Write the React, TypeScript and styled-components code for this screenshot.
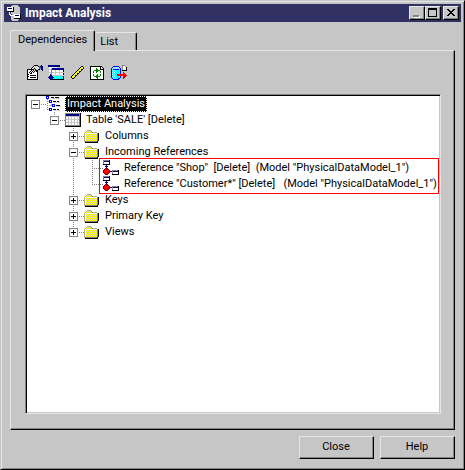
import React, { useState } from 'react';
import styled, { createGlobalStyle, css } from 'styled-components';

const face = '#c6c6c6';
const light = '#e7e7e7';
const shade = '#848484';

const GlobalStyle = createGlobalStyle`
  * { box-sizing: border-box; }
  html, body, #root { height: 100%; }
  body { margin: 0; background: ${face}; }
  body, button { font: 11px/16px Roboto, "Liberation Sans", Arial, sans-serif; color: #000; }
`;

const raised = css`
  border: 1px solid;
  border-color: ${light} #000 #000 ${light};
  box-shadow: inset -1px -1px ${shade};
`;

/* ---------- bitmap icons ---------- */

const palette: Record<string, string> = {
  k: '#000000',
  w: '#ffffff',
  g: '#848484',
  h: '#adad94',
  l: '#c6c6c6',
  n: '#000084',
  b: '#0000ff',
  y: '#ffff00',
  p: '#d6d69c',
  c: '#00ffff',
  a: '#a5f7ff',
  r: '#ff0000',
  m: '#840000',
  e: '#008400',
  s: '#4a6b9c',
};

const bitmaps = {
  app: [
    '.....llllll.....',
    '....llllllll....',
    'wwwwwwkllllll...',
    'wnnnnwkllllll...',
    'wwwwwwkllllll...',
    'wwwwwwkllllll...',
    'kkkkkkkllllll...',
    '..w.lllllllll...',
    '..w.lllllllll...',
    '..ww.llwwwwwwk..',
    '...wwwwwnnnnwk..',
    '....lllwwwwwwk..',
    '....lllwwwwwwk..',
    '....lllkkkkkkk..',
    '....llllllll....',
    '.....llllll.....',
  ],
  properties: [
    '.......kkkk...n.',
    '......kwlwlksnnn',
    '.....kwlwlwlssnn',
    '....kwlklwlwssnn',
    'kkkkkkklklwkk.nn',
    'kwwwkwkwkkk....n',
    'kwwkwkwkwkk.....',
    'kwkwkwkwwwk.....',
    'kwwkkwwwwwk.....',
    'kkwwwwwwwwk.....',
    'kwwkkkkkkwk.....',
    'kkwwwwwwwwk.....',
    'kwwkkkkkkwk.....',
    'kwwwwwwwwwk.....',
    'kkkkkkkkkkk.....',
    '................',
  ],
  tables: [
    'nnnnnnnnnnnn....',
    'nnnnnnnnnnnn....',
    'lwwlwwlwwl......',
    'lwwlnnnnnnnnnnnn',
    'lllgnnnnnnnnnnnn',
    'lwwgwwwlwwwlwwwk',
    'lwwgwwwlwwwlwwwk',
    'lllgllllllllllll',
    'lwwgwwwlwwwlwwwk',
    'lwngwwwlwwwlwwwk',
    '..nn.lllllllllll',
    '.nnnncclccclccck',
    'nnnnnnclccclccck',
    '.nnnncclccclccck',
    '..nnkkkkkkkkkkkk',
    '................',
  ],
  ruler: [
    '................',
    '............kk..',
    '...........kyyk.',
    '..........kyyyk.',
    '.........kyykk..',
    '........kyyyk...',
    '.......kyykk....',
    '......kyyyk.....',
    '.....kyykk......',
    '....kyyyk.......',
    '...kyykk........',
    '..kyyyk.........',
    '..kyyk..........',
    '...kk...........',
    '................',
    '................',
  ],
  refresh: [
    '................',
    'kkkkkkkkkkkk....',
    'kwwwwwwwwwkwk...',
    'kwwwwwewwwkwwk..',
    'kwwwwweewwkkkk..',
    'kwwweeeeeewwwk..',
    'kwwewweewwewwk..',
    'kwwewwewwwewwk..',
    'kwwwwwwwwwwwwk..',
    'kwwewwwewwewwk..',
    'kwwewweewwewwk..',
    'kwwweeeeeewwwk..',
    'kwwwwweewwwwwk..',
    'kwwwwwwewwwwwk..',
    'kkkkkkkkkkkkkk..',
    '................',
  ],
  database: [
    '...........ggg..',
    '..bbbbbb...gwwg.',
    '.baaaaaab..gwwwk',
    'bacacacacb.gwwwk',
    'bcbbbbbbcb.gwwwk',
    'bacacccccb.kkkkk',
    'bcacaccccb......',
    'bacacccccb..r...',
    'bcacaccccb..rr..',
    'bacaccrrrrrrrrr.',
    'bcacacrrrrrrrrrr',
    'bacacccccb..rrm.',
    'bcacaccccb..rm..',
    '.bacaccbb...m...',
    '..bbbbbb........',
    '................',
  ],
  hierarchy: [
    'bbb.............',
    'bwb..kkk.kkkk...',
    'bbb...lll.llll..',
    '.g..............',
    '...bbb..........',
    '.glbwb.kkk.kk...',
    '...bbb..lll.ll..',
    '.g..............',
    '.....lbbb.......',
    '.g.llgbwb.kkkk..',
    '......bbb..llll.',
    '.g..............',
    '...bbb..........',
    '.glbwb.kkk.kk...',
    '...bbb..lll.ll..',
    '................',
  ],
  table: [
    '................',
    'gggggggggggggggk',
    'gnnnnnnnnnnnnngk',
    'gnnnnnnnnnnnnngk',
    'glllllllllllllgk',
    'gwwlwwlwwlwwlwgk',
    'gwwlwwlwwlwwlwgk',
    'glllllllllllllgk',
    'gwwlwwlwwlwwlwgk',
    'gwwlwwlwwlwwlwgk',
    'glllllllllllllgk',
    'gwwlwwlwwlwwlwgk',
    'gwwlwwlwwlwwlwgk',
    'gggggggggggggggk',
    'kkkkkkkkkkkkkkkk',
    '................',
  ],
  folder: [
    '................',
    '................',
    '...hhhh.........',
    '..hypypg........',
    '.hypypypghhhh...',
    'hwwwwwwwwwwwwgk.',
    'hwypypypypypygk.',
    'hwpypypypypypgk.',
    'hwypypypypypygk.',
    'hwpypypypypypgk.',
    'hwypypypypypygk.',
    'hwpypypypypypgk.',
    'hwypypypypypygk.',
    'hggggggggggggk..',
    '.kkkkkkkkkkkkk..',
    '................',
  ],
  reference: [
    'ggggggk.........',
    'gnnnnnk.........',
    'gwwwwwk.........',
    'gwwwwwk.........',
    'kkkkkkk.........',
    '...n............',
    '..nnn...........',
    '...n............',
    '..mmm...........',
    '.mrrrm..........',
    'mrrrrrm..ggggggk',
    'mrrrrrmnngnnnnnk',
    'mrrrrrm..gwwwwwk',
    '.mrrrm...gwwwwwk',
    '..mmm....kkkkkkk',
    '................',
  ],
};

type IconName = keyof typeof bitmaps;

const Bitmap = styled.svg`
  display: block;
  flex: none;
  width: 16px;
  height: 16px;
`;

function Icon({ name }: { name: IconName }) {
  const strokes: Record<string, string> = {};
  bitmaps[name].forEach((row, y) => {
    for (const run of row.matchAll(/([a-z])\1*/g)) {
      strokes[run[1]] = (strokes[run[1]] ?? '') + `M${run.index} ${y}h${run[0].length}v1h-${run[0].length}z`;
    }
  });
  return (
    <Bitmap viewBox="0 0 16 16" shapeRendering="crispEdges" aria-hidden="true">
      {Object.entries(strokes).map(([key, d]) => (
        <path key={key} d={d} fill={palette[key]} />
      ))}
    </Bitmap>
  );
}

/* ---------- window frame ---------- */

const Window = styled.main`
  display: flex;
  flex-direction: column;
  min-height: 100%;
  padding: 3px;
  background: ${face};
  border: 1px solid;
  border-color: ${face} #000 #000 ${face};
  box-shadow: inset 1px 1px ${light}, inset -1px -1px ${shade};
`;

const TitleBar = styled.header`
  display: flex;
  align-items: center;
  height: 18px;
  padding: 0 2px 0 3px;
  background: #313163;
  color: #fff;
`;

const Title = styled.h1`
  flex: 1;
  margin: 0 0 0 2px;
  font-size: 12px;
  font-weight: bold;
  line-height: 18px;
`;

const CaptionButton = styled.button<{ $apart?: boolean }>`
  ${raised}
  display: grid;
  place-items: center;
  width: 16px;
  height: 14px;
  margin-left: ${(p) => (p.$apart ? '2px' : '0')};
  padding: 0 1px 1px 0;
  background: ${face};
`;

const Glyph = styled.svg`
  display: block;
  width: 10px;
  height: 10px;
`;

/* ---------- tabs ---------- */

const Content = styled.div`
  flex: 1;
  display: flex;
  flex-direction: column;
  padding: 8px 6px 7px;
`;

const TabList = styled.div`
  display: flex;
  align-items: flex-end;
`;

const Tab = styled.button<{ $active?: boolean }>`
  position: relative;
  z-index: ${(p) => (p.$active ? 1 : 0)};
  height: ${(p) => (p.$active ? '21px' : '18px')};
  margin-bottom: ${(p) => (p.$active ? '-1px' : '0')};
  padding: ${(p) => (p.$active ? '0 7px 3px' : '0 18px 0 5px')};
  background: ${face};
  border: 1px solid;
  border-color: ${light} #000 ${face} ${light};
  border-left-width: ${(p) => (p.$active ? '1px' : '0')};
  border-bottom-width: 0;
  border-radius: 3px 2px 0 0;
  box-shadow: inset -1px 0 ${shade};
`;

const Panel = styled.section`
  ${raised}
  flex: 1;
  display: flex;
  flex-direction: column;
  padding: 14px 13px 15px 14px;
`;

const Toolbar = styled.div`
  display: flex;
  gap: 5px;
  padding: 0 2px;
  margin-bottom: 13px;
`;

const ToolButton = styled.button`
  padding: 0;
  background: none;
  border: 0;
`;

/* ---------- tree ---------- */

const TreeBox = styled.div`
  flex: 1;
  background: #fff;
  border: 1px solid;
  border-color: ${shade} ${light} ${light} ${shade};
  box-shadow: inset 1px 1px #000, inset -1px -1px ${face};
`;

const Branch = styled.ul<{ $root?: boolean; $marked?: boolean }>`
  position: relative;
  width: max-content;
  margin: ${(p) => (p.$root ? '1px 0 0 1px' : '0 0 0 19px')};
  padding: 0;
  list-style: none;

  ${(p) =>
    p.$marked &&
    css`
      &::after {
        content: '';
        position: absolute;
        z-index: 1;
        inset: -2px 0 -2px 15px;
        border: 1px solid #f00;
        pointer-events: none;
      }
    `}
`;

const Node = styled.li<{ $root?: boolean }>`
  position: relative;

  &::before {
    content: '';
    display: ${(p) => (p.$root ? 'none' : 'block')};
    position: absolute;
    top: 0;
    bottom: 0;
    left: 8px;
    width: 1px;
    background: repeating-linear-gradient(${shade} 0 1px, transparent 1px 2px);
  }

  &:last-child::before {
    bottom: auto;
    height: 8px;
  }
`;

const Row = styled.div`
  display: flex;
  align-items: center;
  height: 16px;
`;

const Joint = styled.span`
  display: flex;
  align-items: center;
  width: 19px;
  height: 16px;
  padding-left: 4px;
  background: repeating-linear-gradient(90deg, ${shade} 0 1px, transparent 1px 2px) 8px 8px / 11px 1px no-repeat;
`;

const Expander = styled.button`
  position: relative;
  display: grid;
  place-items: center;
  width: 9px;
  height: 9px;
  padding: 0;
  background: #fff;
  border: 1px solid ${shade};
`;

const Sign = styled.svg`
  display: block;
  width: 7px;
  height: 7px;
`;

const Label = styled.span<{ $selected?: boolean }>`
  margin-left: 3px;
  padding: 0 2px;
  white-space: pre;
  ${(p) =>
    p.$selected &&
    css`
      background: #000;
      color: #fff;
      outline: 1px dotted #fff;
      outline-offset: -1px;
    `}
`;

/* ---------- footer ---------- */

const Footer = styled.footer`
  display: flex;
  justify-content: flex-end;
  gap: 6px;
  margin-top: 6px;
`;

const PushButton = styled.button`
  ${raised}
  width: 75px;
  height: 23px;
  padding: 0 1px 1px 0;
  background: ${face};
`;

interface TreeItem {
  label: string;
  icon: IconName;
  open?: boolean;
  marked?: boolean;
  children?: TreeItem[];
}

const tree: TreeItem = {
  label: 'Impact Analysis',
  icon: 'hierarchy',
  open: true,
  children: [
    {
      label: "Table 'SALE' [Delete]",
      icon: 'table',
      open: true,
      children: [
        { label: 'Columns', icon: 'folder', children: [] },
        {
          label: 'Incoming References',
          icon: 'folder',
          open: true,
          marked: true,
          children: [
            { label: 'Reference "Shop"  [Delete]  (Model "PhysicalDataModel_1")', icon: 'reference' },
            { label: 'Reference "Customer*" [Delete]   (Model "PhysicalDataModel_1")', icon: 'reference' },
          ],
        },
        { label: 'Keys', icon: 'folder', children: [] },
        { label: 'Primary Key', icon: 'folder', children: [] },
        { label: 'Views', icon: 'folder', children: [] },
      ],
    },
  ],
};

function TreeNode({ item, root }: { item: TreeItem; root?: boolean }) {
  const [open, setOpen] = useState(Boolean(item.open));
  return (
    <Node $root={root} role="treeitem" aria-selected={Boolean(root)}>
      <Row>
        <Joint>
          {item.children && (
            <Expander aria-label={`Toggle ${item.label}`} aria-expanded={open} onClick={() => setOpen(!open)}>
              <Sign viewBox="0 0 7 7" shapeRendering="crispEdges">
                <path d={open ? 'M1 3h5v1H1z' : 'M1 3h5v1H1zM3 1h1v5H3z'} />
              </Sign>
            </Expander>
          )}
        </Joint>
        <Icon name={item.icon} />
        <Label $selected={root}>{item.label}</Label>
      </Row>
      {open && item.children && item.children.length > 0 && (
        <Branch role="group" $marked={item.marked}>
          {item.children.map((child) => (
            <TreeNode key={child.label} item={child} />
          ))}
        </Branch>
      )}
    </Node>
  );
}

const tools: { icon: IconName; label: string }[] = [
  { icon: 'properties', label: 'Properties' },
  { icon: 'tables', label: 'Add tables' },
  { icon: 'ruler', label: 'Ruler' },
  { icon: 'refresh', label: 'Refresh' },
  { icon: 'database', label: 'Export' },
];

export default function App() {
  return (
    <>
      <GlobalStyle />
      <Window>
        <TitleBar>
          <Icon name="app" />
          <Title>Impact Analysis</Title>
          <CaptionButton aria-label="Minimize">
            <Glyph viewBox="0 0 10 10" shapeRendering="crispEdges">
              <path d="M2 9h6v1H2zM7 8h1v1H7z" fill="#fff" />
              <path d="M1 7h6v2H1z" fill={shade} />
            </Glyph>
          </CaptionButton>
          <CaptionButton aria-label="Maximize">
            <Glyph viewBox="0 0 10 10" shapeRendering="crispEdges">
              <path d="M0 0h9v9H0zM1 2v6h7V2z" fillRule="evenodd" />
            </Glyph>
          </CaptionButton>
          <CaptionButton aria-label="Close window" $apart>
            <Glyph viewBox="0 0 10 10" shapeRendering="crispEdges">
              <path d="M1 1h2v1h1v1h2v-1h1v-1h2v1h-1v1h-1v1h-1v1h1v1h1v1h1v1h-2v-1h-1v-1h-2v1h-1v1h-2v-1h1v-1h1v-1h1v-1h-1v-1h-1v-1h-1z" />
            </Glyph>
          </CaptionButton>
        </TitleBar>
        <Content>
          <TabList role="tablist">
            <Tab role="tab" aria-selected="true" $active>
              Dependencies
            </Tab>
            <Tab role="tab" aria-selected="false">
              List
            </Tab>
          </TabList>
          <Panel role="tabpanel" aria-label="Dependencies">
            <Toolbar role="toolbar" aria-label="Analysis tools">
              {tools.map((tool) => (
                <ToolButton key={tool.icon} aria-label={tool.label}>
                  <Icon name={tool.icon} />
                </ToolButton>
              ))}
            </Toolbar>
            <TreeBox>
              <Branch role="tree" $root>
                <TreeNode item={tree} root />
              </Branch>
            </TreeBox>
          </Panel>
          <Footer>
            <PushButton>Close</PushButton>
            <PushButton>Help</PushButton>
          </Footer>
        </Content>
      </Window>
    </>
  );
}
